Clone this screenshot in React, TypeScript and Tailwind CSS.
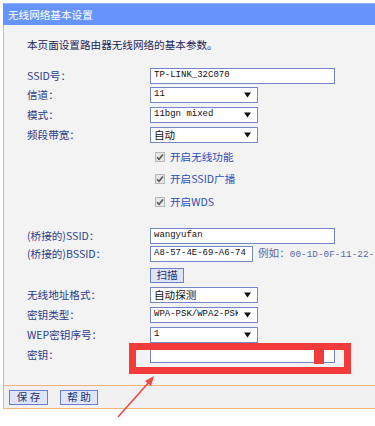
import type { ReactNode } from "react";

const cjk = "font-['Noto_Sans_CJK_SC',sans-serif]";
const mono = "font-['Liberation_Mono','Noto_Sans_CJK_SC',monospace]";

function Arrow() {
  return (
    <svg width="7" height="6" viewBox="0 0 7 6" className="shrink-0">
      <path d="M0 0.5h7L3.5 5.5z" fill="#111" />
    </svg>
  );
}

function TextBox({ value, w }: { value?: string; w: string }) {
  return (
    <div className={`flex h-full items-center border border-[#7486c8] bg-white pl-[3px] text-[9px] text-[#111] ${mono} ${w}`}>
      {value}
    </div>
  );
}

function Select({ value, cjkText }: { value: string; cjkText?: boolean }) {
  return (
    <div className="flex h-full w-[108px] items-center justify-between border border-[#7486c8] bg-white pl-[3px] pr-[6px]">
      <span className={`w-[84px] overflow-hidden whitespace-nowrap text-[#111] ${cjkText ? `${cjk} text-[10.6px]` : `${mono} text-[9px]`}`}>
        {value}
      </span>
      <Arrow />
    </div>
  );
}

function Row({ label, children, className }: { label?: string; children: ReactNode; className: string }) {
  return (
    <div className={`flex items-center ${className}`}>
      <div className={`w-[146px] shrink-0 pl-[23px] text-[10.6px] leading-none text-[#283c8a] ${cjk}`}>{label}</div>
      {children}
    </div>
  );
}

function Check({ label, className }: { label: string; className: string }) {
  return (
    <div className={`flex h-[14px] items-center gap-[5px] pl-[151px] ${className}`}>
      <span className="flex h-[10px] w-[10px] items-center justify-center border border-[#b8b8b8] bg-[#e6e6e6]">
        <svg width="8" height="8" viewBox="0 0 8 8">
          <path d="M1 4.2l2 2L7 1.5" stroke="#555" strokeWidth="1.6" fill="none" />
        </svg>
      </span>
      <span className={`text-[10.6px] leading-none text-[#2d4fb5] ${cjk}`}>{label}</span>
    </div>
  );
}

function Btn({ label, className }: { label: string; className?: string }) {
  return (
    <div className={`flex h-[15px] items-center justify-center border border-[#6b80cc] bg-[#dfe4f7] text-[10.6px] leading-none text-[#1e2f6e] ${cjk} ${className ?? ""}`}>
      {label}
    </div>
  );
}

export default function App() {
  return (
    <div className="relative h-[426px] w-[375px] overflow-hidden bg-white pt-[3px]">
      <div className={`ml-[3px] flex h-[22px] items-center border-t border-[#8fb2ff] bg-[#6595fc] pl-[5px] text-[10.6px] text-white ${cjk}`}>
        无线网络基本设置
      </div>

      <div className="ml-[3px] h-[360px] border-l border-[#f3b476] bg-[#f3f3f4] pt-[12px]">
        <div className={`flex h-[16px] items-center pl-[23px] text-[10.6px] text-[#1c2656] ${cjk}`}>
          本页面设置路由器无线网络的基本参数。
        </div>

        <Row label="SSID号：" className="mt-[15px] h-[16px]">
          <TextBox value="TP-LINK_32C070" w="w-[185px]" />
        </Row>
        <Row label="信道：" className="mt-[3px] h-[16px]">
          <Select value="11" />
        </Row>
        <Row label="模式：" className="mt-[4px] h-[16px]">
          <Select value="11bgn mixed" />
        </Row>
        <Row label="频段带宽：" className="mt-[4px] h-[16px]">
          <Select value="自动" cjkText />
        </Row>

        <Check label="开启无线功能" className="mt-[7px]" />
        <Check label="开启SSID广播" className="mt-[8px]" />
        <Check label="开启WDS" className="mt-[9px]" />

        <Row label="(桥接的)SSID：" className="mt-[19px] h-[16px]">
          <TextBox value="wangyufan" w="w-[185px]" />
        </Row>
        <Row label="(桥接的)BSSID：" className="mt-[2px] h-[16px]">
          <TextBox value="A8-57-4E-69-A6-74" w="w-[103px] shrink-0" />
          <span className={`ml-[5px] whitespace-nowrap text-[10.6px] text-[#5a6a9a] ${cjk}`}>
            例如：<span className={`${mono} text-[9.4px]`}>00-1D-0F-11-22-33</span>
          </span>
        </Row>
        <Row className="mt-[6px] h-[14px]">
          <Btn label="扫描" className="h-[14px] w-[34px]" />
        </Row>
        <Row label="无线地址格式：" className="mt-[5px] h-[16px]">
          <Select value="自动探测" cjkText />
        </Row>
        <Row label="密钥类型：" className="mt-[4px] h-[16px]">
          <Select value="WPA-PSK/WPA2-PSK" />
        </Row>
        <Row label="WEP密钥序号：" className="mt-[4px] h-[16px]">
          <Select value="1" />
        </Row>
        <Row label="密钥：" className="mt-[5px] h-[15px]">
          <TextBox w="w-[185px]" />
        </Row>
      </div>

      <div className="ml-[3px] flex h-[24px] items-center gap-[12px] border-y border-l border-[#f3b476] bg-[#f1f1f2] pl-[5px]">
        <Btn label="保 存" className="w-[39px]" />
        <Btn label="帮 助" className="w-[38px]" />
      </div>

      {/* red annotation */}
      <div className="absolute left-[129px] top-[343px] h-[31px] w-[222px] border-[7px] border-[#f23b3b]" />
      <div className="absolute left-[314px] top-[349px] h-[15px] w-[10px] bg-[#f23b3b]" />
      <svg className="absolute left-[110px] top-[370px]" width="50" height="55" viewBox="0 0 50 55">
        <path d="M8 47L40 11" stroke="#f04848" strokeWidth="1.6" />
        <path d="M44 6L35 11L41 16z" fill="#f04848" />
      </svg>
    </div>
  );
}
